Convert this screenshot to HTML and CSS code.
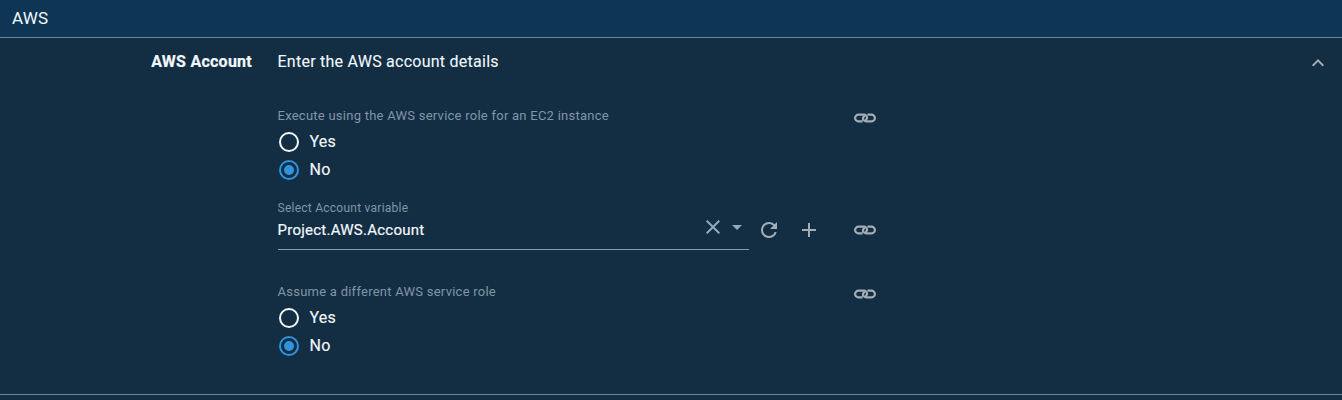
FILE: index.html
```html
<!DOCTYPE html>
<html lang="en">
<head>
<meta charset="utf-8">
<title>AWS Account</title>
<link rel="stylesheet" href="styles.css">
</head>
<body>
<svg width="0" height="0" class="defs">
  <symbol id="link" viewBox="0 0 24 12">
    <path d="M9.600 9.300H5.400a3.300 3.300 0 0 1 0-6.600H10.800a3.300 3.300 0 0 1 3.300 3.300Q14 7.400 12.200 7.800M14.400 2.700H18.600a3.300 3.300 0 0 1 0 6.600H13.200a3.300 3.300 0 0 1-3.300-3.300Q10 4.600 11.800 4.200" fill="none" stroke="currentColor" stroke-width="2.200"/>
  </symbol>
</svg>
<header class="group-title">AWS</header>
<section class="panel">
  <div class="panel-head">
    <h2 class="label">AWS Account</h2>
    <p class="summary">Enter the AWS account details</p>
    <svg class="chevron" viewBox="0 0 24 24"><path d="M12 8l-6 6 1.410 1.410L12 10.830l4.590 4.580L18 14z" fill="currentColor"/></svg>
  </div>
  <div class="fields">
    <div class="field">
      <div class="choices">
        <div class="caption">Execute using the AWS service role for an EC2 instance</div>
        <label class="option"><span class="radio"></span>Yes</label>
        <label class="option"><span class="radio checked"></span>No</label>
      </div>
      <svg class="link"><use href="#link"/></svg>
    </div>
    <div class="field account">
      <div class="select">
        <div class="select-label">Select Account variable</div>
        <div class="select-row">
          <span class="value">Project.AWS.Account</span>
          <svg class="clear" viewBox="0 0 24 24"><path d="M19 6.410L17.590 5 12 10.590 6.410 5 5 6.410 10.590 12 5 17.590 6.410 19 12 13.410 17.590 19 19 17.590 13.410 12z" fill="currentColor"/></svg>
          <svg class="arrow" viewBox="0 0 10 5"><path d="M0 0h10L5 5z" fill="currentColor"/></svg>
        </div>
      </div>
      <svg class="action" viewBox="0 0 24 24"><path d="M17.650 6.350A7.958 7.958 0 0 0 12 4a8 8 0 1 0 7.730 10h-2.080A6 6 0 1 1 12 6c1.660 0 3.140.690 4.220 1.780L13 11h7V4z" fill="currentColor"/></svg>
      <svg class="action add" viewBox="0 0 24 24"><path d="M19 13h-6v6h-2v-6H5v-2h6V5h2v6h6z" fill="currentColor"/></svg>
      <svg class="link"><use href="#link"/></svg>
    </div>
    <div class="field">
      <div class="choices">
        <div class="caption">Assume a different AWS service role</div>
        <label class="option"><span class="radio"></span>Yes</label>
        <label class="option"><span class="radio checked"></span>No</label>
      </div>
      <svg class="link"><use href="#link"/></svg>
    </div>
  </div>
</section>
</body>
</html>
```

FILE: styles.css
```css
* { box-sizing: border-box; }
body { margin: 0; height: 400px; overflow: hidden; background: #132e43; color: #f2f8fd; font: 16px/24px Roboto, sans-serif; letter-spacing: .25px; }
.defs { display: block; }
.group-title { height: 38px; padding: 6px 12px; background: #0f3555; border-bottom: 1px solid #68879a; font-size: 17px; letter-spacing: .15px; }
.panel { height: 357px; border-bottom: 1px solid #68879a; }
.panel-head { display: flex; height: 68px; padding-top: 12px; }
.label { width: 252px; margin: 0 25.500px 0 0; text-align: right; font-size: 16px; font-weight: 700; -webkit-text-stroke: .2px; }
.summary { margin: 0; flex: 1; -webkit-text-stroke: .1px; }
.chevron { width: 24px; height: 24px; margin: 1px 12px 0 0; color: #a2adb6; }
.fields { padding-left: 277.500px; }
.field { display: flex; height: 92px; }
.account { height: 84px; }
.choices { width: 575.500px; }
.caption { height: 22px; line-height: 20px; font-size: 13px; color: #8095a7; }
.option { display: flex; align-items: center; height: 28px; -webkit-text-stroke: .15px; }
.radio { width: 20px; height: 20px; margin: 0 11px 0 1px; border: 2px solid #f2f8fd; border-radius: 50%; }
.checked { border-color: #2f93e0; padding: 3px; background: #2f93e0 content-box; }
.link { width: 24px; height: 12px; margin-top: 6px; color: #a2adb6; }
.select { width: 471.500px; height: 52px; border-bottom: 1px solid #849cad; }
.select-label { height: 20px; line-height: 20px; font-size: 12px; color: #8095a7; }
.select-row { display: flex; align-items: center; height: 24px; color: #93a9b8; }
.value { flex: 1; color: #f2f8fd; font-size: 15px; -webkit-text-stroke: .2px; }
.clear { width: 24px; height: 24px; margin: -6px 7px 0 0; }
.arrow { width: 10px; height: 5px; margin: -6px 7px 0 0; }
.action { width: 24px; height: 24px; margin: 20px 0 0 8px; color: #a2adb6; }
.add { margin-left: 16px; }
.account .link { margin: 26px 0 0 32px; }
```
